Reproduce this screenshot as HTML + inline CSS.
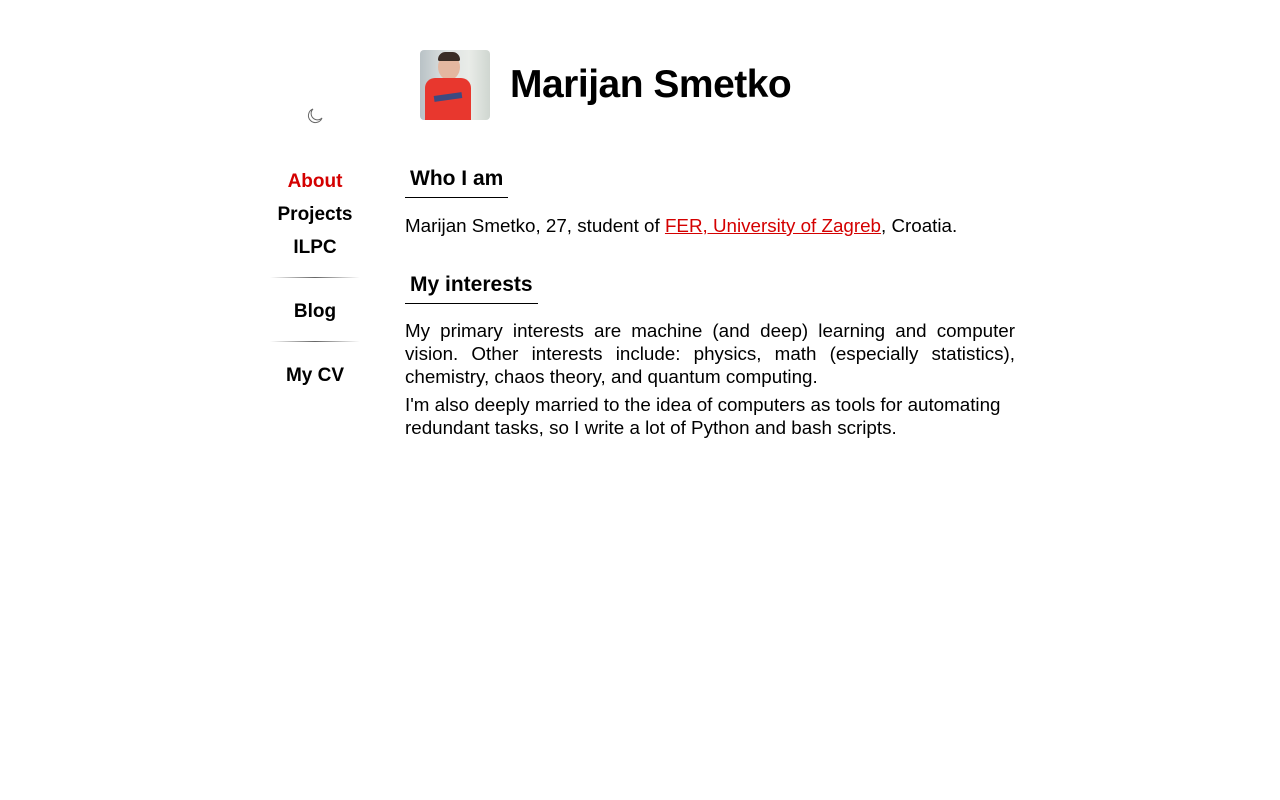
<!DOCTYPE html>
<html><head><meta charset="utf-8"><style>
body{margin:0;background:#fff;font-family:"Liberation Sans",sans-serif;color:#000;}
.photo{position:absolute;left:420px;top:50px;width:70px;height:70px;border-radius:4px;overflow:hidden;background:linear-gradient(90deg,#b9c2c6 0%,#dfe3e2 40%,#e9ece8 70%,#cfd6d0 100%);}
h1{position:absolute;left:510px;top:61px;margin:0;font-size:39px;font-weight:bold;line-height:48px;letter-spacing:-0.5px}
.moon{position:absolute;left:306px;top:107px}
nav{position:absolute;left:270px;top:170px;width:90px;text-align:center;font-weight:bold;font-size:19px}
nav div{position:absolute;left:0;width:90px;line-height:24px}
nav hr{position:absolute;left:0;width:90px;border:0;height:1px;margin:0;background:linear-gradient(90deg,transparent,#666,transparent)}
.main{position:absolute;left:405px;top:165px;width:610px;font-size:18.8px;line-height:23px}
h2{display:inline-block;margin:0;padding:0 5px;font-size:21px;line-height:28px;border-bottom:1px solid #000;padding-bottom:4px}
p{margin:6px 0 0;text-align:justify}
a{color:#d40000}
</style></head><body>
<div class="photo">
<div style="position:absolute;left:18px;top:4px;width:22px;height:26px;border-radius:50%;background:#e4b7a0"></div>
<div style="position:absolute;left:18px;top:2px;width:22px;height:9px;border-radius:10px 10px 2px 2px;background:#3a2c25"></div>
<div style="position:absolute;left:5px;top:28px;width:46px;height:42px;border-radius:10px 10px 0 0;background:#e8372e"></div>
<div style="position:absolute;left:14px;top:44px;width:28px;height:6px;background:#3c4a80;transform:rotate(-8deg)"></div>
</div>
<h1>Marijan Smetko</h1>
<svg class="moon" width="18" height="18" viewBox="0 0 18 18"><path d="M7 2a7 7 0 1 0 9 9A6 6 0 0 1 7 2z" fill="none" stroke="#666" stroke-width="1"/></svg>
<nav>
<div style="top:0;color:#d40000">About</div>
<div style="top:33px">Projects</div>
<div style="top:66px">ILPC</div>
<hr style="top:107px">
<div style="top:130px">Blog</div>
<hr style="top:171px">
<div style="top:194px">My CV</div>
</nav>
<div class="main">
<h2>Who I am</h2>
<p style="margin-top:16px">Marijan Smetko, 27, student of <a href="#">FER, University of Zagreb</a>, Croatia.</p>
<h2 style="margin-top:34px">My interests</h2>
<p style="margin-top:15px">My primary interests are machine (and deep) learning and computer vision. Other interests include: physics, math (especially statistics), chemistry, chaos theory, and quantum computing.</p>
<p style="margin-top:5px;text-align:left">I'm also deeply married to the idea of computers as tools for automating redundant tasks, so I write a lot of Python and bash scripts.</p>
</div>
</body></html>
